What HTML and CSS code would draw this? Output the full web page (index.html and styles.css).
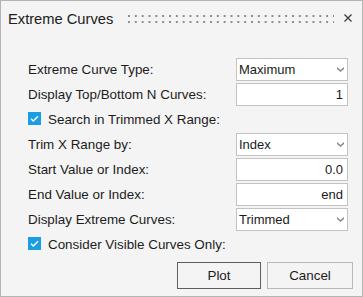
FILE: index.html
```html
<!DOCTYPE html>
<html>
<head>
<meta charset="utf-8">
<link rel="stylesheet" href="styles.css">
</head>
<body>
<div class="dialog">
  <div class="titlebar">
    <span class="title">Extreme Curves</span>
    <svg class="grip" width="206" height="8" viewBox="0 0 206 8">
      <defs>
        <pattern id="dots" x="0" y="0" width="6.833" height="6" patternUnits="userSpaceOnUse">
          <rect x="0" y="0" width="2" height="2" fill="#8e8e8e"/>
        </pattern>
      </defs>
      <rect x="0" y="0" width="206" height="8" fill="url(#dots)"/>
    </svg>
    <svg class="close" width="8" height="8" viewBox="0 0 8 8">
      <path d="M0.5 0.5 L7.5 7.5 M7.5 0.5 L0.5 7.5" stroke="#3c3c3c" stroke-width="1.3" fill="none"/>
    </svg>
  </div>
  <div class="form">
    <div class="row">
      <span class="label">Extreme Curve Type:</span>
      <div class="box select"><span>Maximum</span><svg class="arrow" width="7" height="5" viewBox="0 0 7 5"><path d="M0 0 L3.5 3 L7 0 L7 2 L3.5 5 L0 2 Z" fill="#8a8a8a"/></svg></div>
    </div>
    <div class="row">
      <span class="label">Display Top/Bottom N Curves:</span>
      <div class="box input">1</div>
    </div>
    <div class="row">
      <span class="check"><svg width="13" height="13" viewBox="0 0 13 13"><path d="M3 6.8 L5.3 9 L10 4.2" stroke="#fff" stroke-width="1.4" fill="none"/></svg></span>
      <span class="label">Search in Trimmed X Range:</span>
    </div>
    <div class="row">
      <span class="label">Trim X Range by:</span>
      <div class="box select"><span>Index</span><svg class="arrow" width="7" height="5" viewBox="0 0 7 5"><path d="M0 0 L3.5 3 L7 0 L7 2 L3.5 5 L0 2 Z" fill="#8a8a8a"/></svg></div>
    </div>
    <div class="row">
      <span class="label">Start Value or Index:</span>
      <div class="box input">0.0</div>
    </div>
    <div class="row">
      <span class="label">End Value or Index:</span>
      <div class="box input">end</div>
    </div>
    <div class="row">
      <span class="label">Display Extreme Curves:</span>
      <div class="box select"><span>Trimmed</span><svg class="arrow" width="7" height="5" viewBox="0 0 7 5"><path d="M0 0 L3.5 3 L7 0 L7 2 L3.5 5 L0 2 Z" fill="#8a8a8a"/></svg></div>
    </div>
    <div class="row">
      <span class="check"><svg width="13" height="13" viewBox="0 0 13 13"><path d="M3 6.8 L5.3 9 L10 4.2" stroke="#fff" stroke-width="1.4" fill="none"/></svg></span>
      <span class="label">Consider Visible Curves Only:</span>
    </div>
  </div>
  <div class="buttons">
    <div class="btn default">Plot</div>
    <div class="btn">Cancel</div>
  </div>
</div>
</body>
</html>
```
FILE: styles.css
```css
html, body {
  margin: 0;
  padding: 0;
  background: #f4f4f4;
}
.dialog {
  width: 363px;
  height: 297px;
  box-sizing: border-box;
  border: 1px solid #b4b4b4;
  background: #f4f4f4;
  display: flex;
  flex-direction: column;
  font-family: "Liberation Sans", Arial, sans-serif;
  color: #1c1c1c;
}
.titlebar {
  height: 36px;
  display: flex;
  align-items: center;
  padding: 0 10px 0 7px;
}
.title {
  font-size: 14.7px;
  color: #202020;
}
.grip {
  margin-left: auto;
  display: block;
}
.close {
  margin-left: 10px;
  margin-bottom: 2px;
  display: block;
}
.form {
  padding: 20px 14px 0 27px;
  display: flex;
  flex-direction: column;
}
.row {
  height: 25px;
  display: flex;
  align-items: center;
}
.label {
  flex: 1;
  font-size: 13.4px;
  white-space: nowrap;
}
.box {
  width: 112px;
  height: 23px;
  box-sizing: border-box;
  border: 1px solid #c3c3c3;
  background: #fff;
  font-size: 13px;
  display: flex;
  align-items: center;
  color: #1a1a1a;
}
.select {
  padding: 0 3px 0 2px;
  justify-content: space-between;
}
.select .arrow {
  display: block;
}
.input {
  justify-content: flex-end;
  padding: 0 4px;
}
.check {
  width: 13px;
  height: 13px;
  background: #1a9de2;
  margin-right: 7px;
  margin-bottom: 2px;
  display: block;
}
.check svg {
  display: block;
}
.buttons {
  display: flex;
  justify-content: flex-end;
  gap: 6px;
  padding: 5px 9px 0 0;
}
.btn {
  height: 27px;
  box-sizing: border-box;
  border: 1px solid #b9b9b9;
  background: #f4f4f4;
  font-size: 13.4px;
  display: flex;
  align-items: center;
  justify-content: center;
  width: 86px;
}
.btn.default {
  border-color: #5e5e5e;
  width: 84px;
}
```
